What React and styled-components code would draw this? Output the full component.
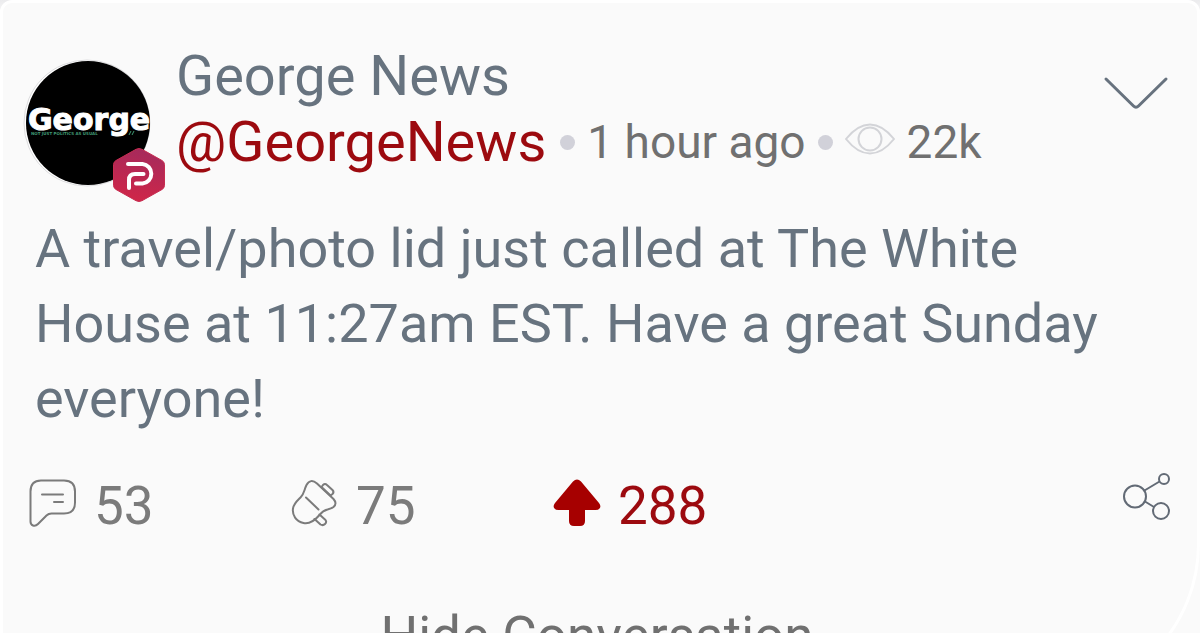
import React from "react";
import styled, { createGlobalStyle } from "styled-components";

const App = () => {
  return (
    <>
      <GlobalStyle />
      <Page>
        <Card>
          <Header>
            <Avatar />
            <Identity>
              <Name>George News</Name>
              <MetaRow>
                <Handle href="#profile">@GeorgeNews</Handle>
                <Dot />
                <Meta>1 hour ago</Meta>
                <Dot />
                <EyeIcon />
                <Meta>22k</Meta>
              </MetaRow>
            </Identity>
            <MenuButton type="button" aria-label="Post options">
              <ChevronIcon />
            </MenuButton>
          </Header>
          <Message>
            A travel/photo lid just called at The White House at 11:27am EST.
            Have a great Sunday everyone!
          </Message>
          <Actions>
            <Action type="button" aria-label="Comments">
              <CommentIcon />
              53
            </Action>
            <Action type="button" aria-label="Echoes">
              <EchoIcon />
              75
            </Action>
            <Action type="button" aria-label="Upvotes" $active>
              <UpvoteIcon />
              288
            </Action>
            <ShareButton type="button" aria-label="Share">
              <ShareIcon />
            </ShareButton>
          </Actions>
          <ToggleButton type="button">Hide Conversation</ToggleButton>
        </Card>
      </Page>
    </>
  );
};

export default App;

const Avatar = () => (
  <AvatarBox>
    <svg width="128" height="128" viewBox="0 0 128 128" aria-hidden="true">
      <circle cx="64" cy="64" r="63" fill="#fff" stroke="#dcdcde" />
      <circle cx="65" cy="64" r="62" fill="#000" />
      <AvatarTitle x="5" y="71">
        George
      </AvatarTitle>
      <AvatarTagline x="8" y="76">
        NOT JUST POLITICS AS USUAL
      </AvatarTagline>
      <path d="M106 76l2-4M109 76l2-4" stroke="#3f9873" strokeWidth="1" />
    </svg>
    <Badge width="52" height="56" viewBox="0 0 52 56" aria-hidden="true">
      <defs>
        <linearGradient id="badge" x1="0.6" y1="0" x2="0.4" y2="1">
          <stop offset="0" stopColor="#a52a5c" />
          <stop offset="1" stopColor="#d02648" />
        </linearGradient>
      </defs>
      <path
        d="M23 2.3q3-1.6 6 0L49 13.500q2.500 1.500 2.500 4v21q0 2.500-2.500 4L29 53.700q-3 1.600-6 0L3 42.500q-2.500-1.500-2.500-4v-21q0-2.500 2.500-4z"
        fill="url(#badge)"
        stroke="#c72c50"
      />
      <path
        d="M15 17h14.500a9.800 9.800 0 0 1 0 19.500H23"
        fill="none"
        stroke="#fff"
        strokeWidth="4"
        strokeLinecap="round"
      />
      <path
        d="M16 41v-8q0-6 6-6h8.500"
        fill="none"
        stroke="#fff"
        strokeWidth="4"
        strokeLinecap="round"
      />
    </Badge>
  </AvatarBox>
);

const EyeIcon = () => (
  <Eye width="50" height="34" viewBox="0 0 50 34" aria-hidden="true">
    <path d="M1 17C9 7 17 2.500 25 2.500S41 7 49 17C41 27 33 31.500 25 31.500S9 27 1 17z" />
    <circle cx="25" cy="17" r="11.500" />
  </Eye>
);

const ChevronIcon = () => (
  <svg width="68" height="36" viewBox="0 0 68 36" aria-hidden="true">
    <path
      d="M3 4l27.500 27q2.500 2.500 5 0L63 4"
      fill="none"
      stroke="#67727e"
      strokeWidth="3"
      strokeLinecap="round"
      strokeLinejoin="round"
    />
  </svg>
);

const CommentIcon = () => (
  <Outline width="48" height="48" viewBox="0 0 48 48" aria-hidden="true">
    <path d="M12 1.500h23q11 0 11 11v11q0 11-11 11H22.500q-3 0-5 2l-8.500 8.500q-2.500 2.500-5 1.500t-2.500-4v-30q0-11 10.500-11z" />
    <path d="M13 15.500h21M25 23h9" />
  </Outline>
);

const EchoIcon = () => (
  <Outline width="48" height="48" viewBox="0 0 48 48" aria-hidden="true">
    <path d="M26 4.500L42.500 20q4 4.500 0 8-2 1.500-6 2.500-4.500 1-8 5.500C22 43.500 17 45 12.500 44 5 42.500 1 36 2 29.500c.8-5 4-7.500 7.500-11 4-4 3.500-7.500 6-12.500q4-7 10.500-1.500z" />
    <path d="M30.500 8l1.500-2q2-2 4 0L41.500 11q2 2 0 4l-2 1.500z" />
    <path d="M15 18.500l12.500 12M28.500 35.500l6 5.500q1.500 2-.5 4-2 2-4.500.5l-6-5.500" />
  </Outline>
);

const UpvoteIcon = () => (
  <ActionIcon width="48" height="48" viewBox="0 0 48 48" aria-hidden="true">
    <path
      d="M20 2.500q4-4 8 0l18 21.500q2.500 3 .5 5.500-1 1.500-4 1.500H32v11q0 5-5 5h-6q-5 0-5-5V31H5.500q-3 0-4-1.500-2-2.500.5-5.500z"
      fill="#a60000"
    />
  </ActionIcon>
);

const ShareIcon = () => (
  <svg width="48" height="48" viewBox="0 0 48 48" aria-hidden="true">
    <g fill="none" stroke="#626a75" strokeWidth="2">
      <circle cx="12" cy="24.500" r="11" />
      <circle cx="41" cy="7" r="5" />
      <circle cx="38" cy="39" r="8" />
      <path d="M21.500 18.500L36.500 9.500M22 29.500l9 5.500" />
    </g>
  </svg>
);

const GlobalStyle = createGlobalStyle`
  * {
    box-sizing: border-box;
  }

  body {
    margin: 0;
    background: #fafafa;
    font-family: Roboto, sans-serif;
  }

  button {
    display: flex;
    align-items: center;
    padding: 0;
    border: 0;
    background: none;
    font: inherit;
    cursor: pointer;
  }
`;

const Page = styled.main`
  height: 100vh;
  overflow: hidden;
  background: linear-gradient(#ebebed, #fafafa 16px);
`;

const Card = styled.article`
  padding: 45px 26px 28px 20px;
  border: 3px solid #fff;
  border-radius: 12px 12px 155px 12px;
  background: #fafafa;
`;

const Header = styled.header`
  display: flex;
  align-items: flex-start;
`;

const AvatarBox = styled.div`
  position: relative;
  flex: none;
  width: 128px;
  height: 128px;
  margin: 11px 25px 0 0;
`;

const AvatarTitle = styled.text`
  fill: #fff;
  stroke: #fff;
  stroke-width: 1;
  font: 700 30px "DejaVu Sans", sans-serif;
`;

const AvatarTagline = styled.text`
  fill: #3f9873;
  font: 700 4px "DejaVu Sans", sans-serif;
`;

const Badge = styled.svg`
  position: absolute;
  right: -14px;
  bottom: -16px;
`;

const Identity = styled.div`
  flex: 1;
`;

const Name = styled.h1`
  margin: 0;
  color: #67737f;
  font-size: 56px;
  font-weight: 400;
  line-height: 56px;
`;

const MetaRow = styled.div`
  display: flex;
  align-items: center;
  height: 76px;
`;

const Handle = styled.a`
  margin-right: 2px;
  color: #9c0a0f;
  font-size: 56px;
  text-decoration: none;
`;

const Dot = styled.span`
  width: 15px;
  height: 15px;
  margin: 0 12px;
  border-radius: 50%;
  background: #d1d1d9;
`;

const Meta = styled.span`
  color: #707070;
  font-size: 46px;
`;

const Eye = styled.svg`
  margin: 0 12px 6px 0;
  fill: none;
  stroke: #d3d4d8;
  stroke-width: 2;
`;

const MenuButton = styled.button`
  && {
    margin-top: 27px;
  }
`;

const Message = styled.p`
  margin: 24px 0 0 12px;
  color: #67737f;
  font-size: 54px;
  line-height: 75px;
`;

const Actions = styled.div`
  display: grid;
  grid-template-columns: 262px 262px 1fr auto;
  align-items: center;
  margin-top: 36px;
  padding-left: 6px;
`;

const Action = styled.button`
  && {
    gap: 17px;
    color: ${(props) => (props.$active ? "#9c0a0f" : "#7b7b7b")};
    font-size: 53px;
    line-height: 64px;
  }
`;

const ActionIcon = styled.svg`
  margin-bottom: 6px;
`;

const Outline = styled(ActionIcon)`
  fill: none;
  stroke: #7b7b7b;
  stroke-width: 2;
  stroke-linecap: round;
  stroke-linejoin: round;
`;

const ShareButton = styled.button`
  && {
    padding-bottom: 20px;
  }
`;

const ToggleButton = styled.button`
  && {
    margin: 64px auto 0;
    color: #707070;
    font-size: 53px;
    line-height: 64px;
  }
`;
